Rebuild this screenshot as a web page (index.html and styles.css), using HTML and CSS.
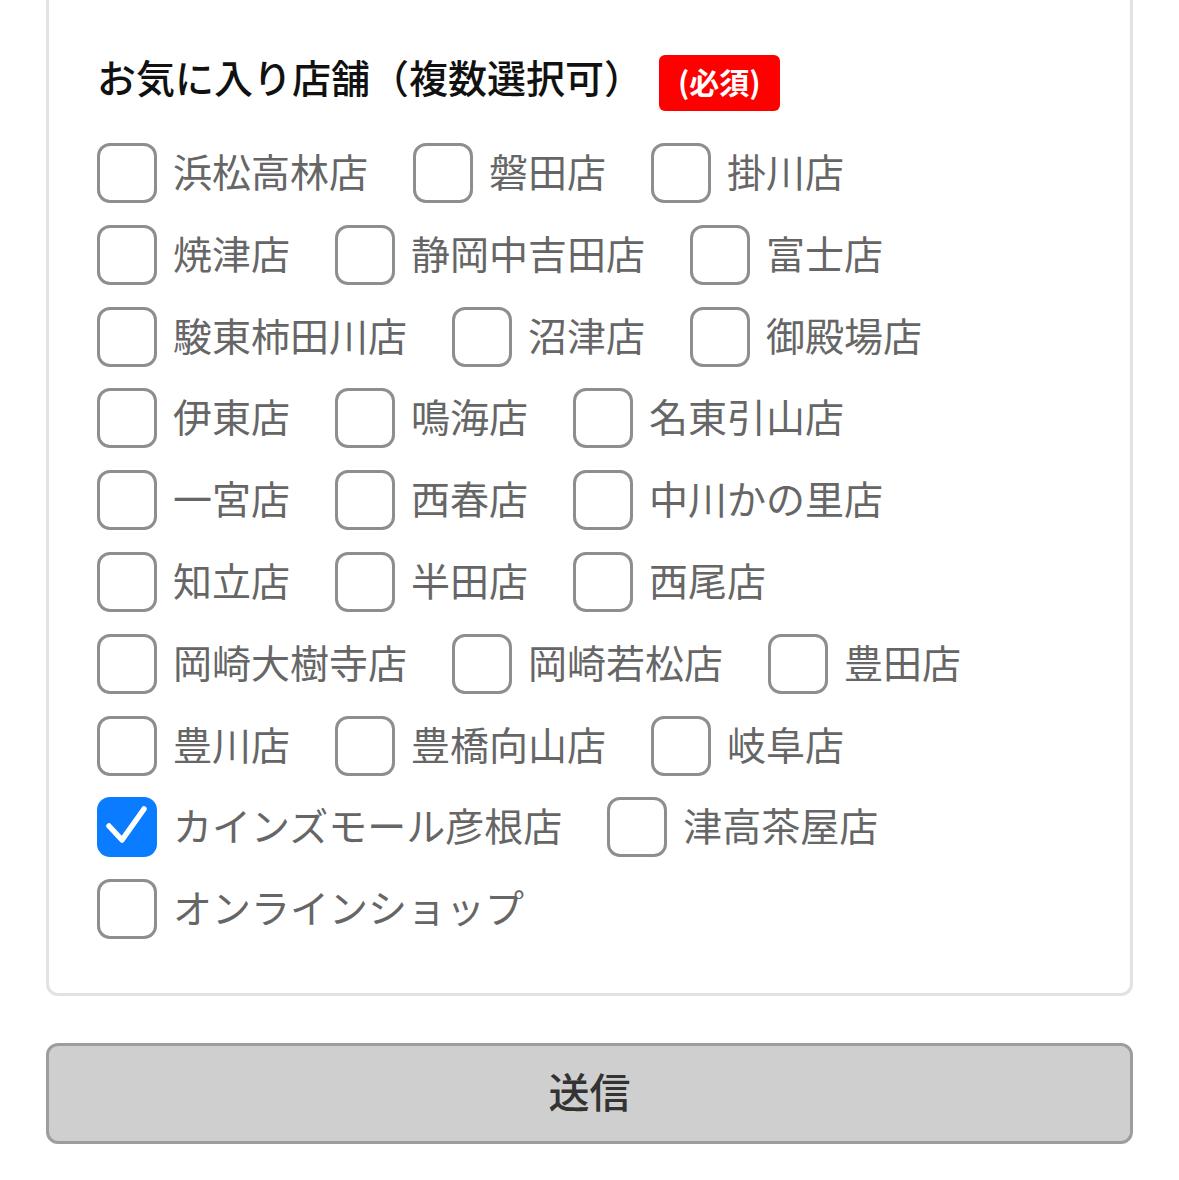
FILE: index.html
```html
<!DOCTYPE html>
<html lang="ja">
<head>
<meta charset="utf-8">
<link rel="stylesheet" href="styles.css">
</head>
<body>
<div class="page">
  <div class="card">
    <div class="title-row">
      <span class="title">お気に入り店舗（複数選択可）</span>
      <span class="badge">(必須)</span>
    </div>
    <div class="options">
      <label class="opt"><span class="box"></span><span class="txt">浜松高林店</span></label>
      <label class="opt"><span class="box"></span><span class="txt">磐田店</span></label>
      <label class="opt"><span class="box"></span><span class="txt">掛川店</span></label>
      <label class="opt"><span class="box"></span><span class="txt">焼津店</span></label>
      <label class="opt"><span class="box"></span><span class="txt">静岡中吉田店</span></label>
      <label class="opt"><span class="box"></span><span class="txt">富士店</span></label>
      <label class="opt"><span class="box"></span><span class="txt">駿東柿田川店</span></label>
      <label class="opt"><span class="box"></span><span class="txt">沼津店</span></label>
      <label class="opt"><span class="box"></span><span class="txt">御殿場店</span></label>
      <label class="opt"><span class="box"></span><span class="txt">伊東店</span></label>
      <label class="opt"><span class="box"></span><span class="txt">鳴海店</span></label>
      <label class="opt"><span class="box"></span><span class="txt">名東引山店</span></label>
      <label class="opt"><span class="box"></span><span class="txt">一宮店</span></label>
      <label class="opt"><span class="box"></span><span class="txt">西春店</span></label>
      <label class="opt"><span class="box"></span><span class="txt">中川かの里店</span></label>
      <label class="opt"><span class="box"></span><span class="txt">知立店</span></label>
      <label class="opt"><span class="box"></span><span class="txt">半田店</span></label>
      <label class="opt"><span class="box"></span><span class="txt">西尾店</span></label>
      <label class="opt"><span class="box"></span><span class="txt">岡崎大樹寺店</span></label>
      <label class="opt"><span class="box"></span><span class="txt">岡崎若松店</span></label>
      <label class="opt"><span class="box"></span><span class="txt">豊田店</span></label>
      <label class="opt"><span class="box"></span><span class="txt">豊川店</span></label>
      <label class="opt"><span class="box"></span><span class="txt">豊橋向山店</span></label>
      <label class="opt"><span class="box"></span><span class="txt">岐阜店</span></label>
      <label class="opt"><span class="box checked"><svg viewBox="0 0 60 60" width="60" height="60"><path d="M12 29 L25 43 L47 12" fill="none" stroke="#fff" stroke-width="5.5" stroke-linecap="round" stroke-linejoin="round"/></svg></span><span class="txt">カインズモール彦根店</span></label>
      <label class="opt"><span class="box"></span><span class="txt">津高茶屋店</span></label>
      <label class="opt"><span class="box"></span><span class="txt">オンラインショップ</span></label>
    </div>
  </div>
  <button class="submit" type="button">送信</button>
</div>
</body>
</html>
```
FILE: styles.css
```css
html, body {
  margin: 0;
  padding: 0;
  background: #fff;
}
body {
  font-family: "Noto Sans CJK JP", "Noto Sans", sans-serif;
}
.page {
  padding: 0 46px;
}
.card {
  border: 3px solid #e2e2e2;
  border-top: 0;
  border-radius: 0 0 12px 12px;
  padding: 55px 40px 54px 48px;
}
.title-row {
  display: flex;
  align-items: center;
  height: 56px;
}
.title {
  font-size: 39px;
  font-weight: 500;
  color: #111;
  line-height: 56px;
  margin-top: -14px;
}
.badge {
  margin-left: 16px;
  background: #ff0000;
  color: #fff;
  font-size: 30px;
  font-weight: 700;
  height: 56px;
  line-height: 52px;
  padding: 0 19px;
  border-radius: 6px;
  box-sizing: border-box;
}
.options {
  display: flex;
  flex-wrap: wrap;
  column-gap: 45px;
  row-gap: 21.8px;
  margin-top: 32px;
  max-width: 940px;
}
.opt {
  display: flex;
  align-items: center;
  gap: 16px;
  height: 60px;
}
.box {
  width: 60px;
  height: 60px;
  box-sizing: border-box;
  border: 3px solid #8e8e8e;
  border-radius: 13px;
  flex: none;
  display: block;
}
.box.checked {
  border: 0;
  background: #0a7cff;
}
.box svg {
  display: block;
}
.txt {
  font-size: 39px;
  color: #666;
  line-height: 60px;
  white-space: nowrap;
  margin-bottom: 6px;
}
.submit {
  display: block;
  width: 100%;
  margin-top: 47px;
  height: 101px;
  background: #cfcfcf;
  border: 3px solid #9d9d9d;
  border-radius: 12px;
  font-family: "Noto Sans CJK JP", sans-serif;
  font-size: 41px;
  font-weight: 500;
  color: #333;
  padding: 0 0 7px;
}
```
